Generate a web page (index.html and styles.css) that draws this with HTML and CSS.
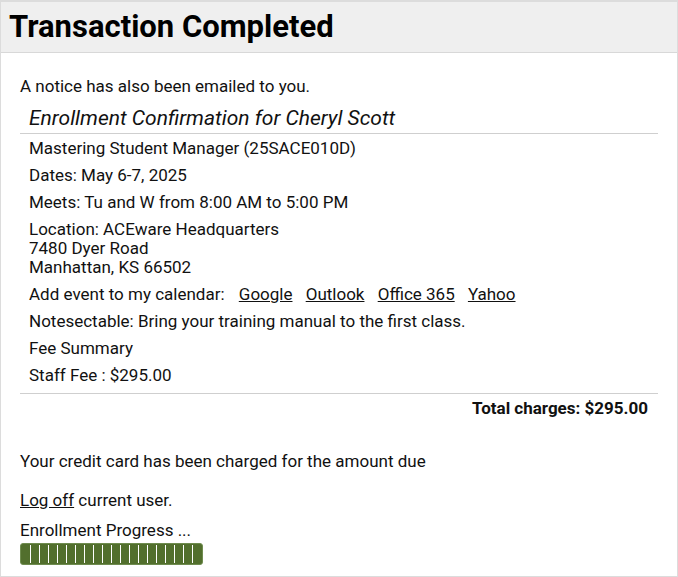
FILE: index.html
```html
<!DOCTYPE html>
<html>
<head>
<meta charset="utf-8">
<link rel="stylesheet" href="styles.css">
</head>
<body>
<div class="page">
  <div class="header"><h1 class="title">Transaction Completed</h1></div>
  <div class="content">
    <p class="notice">A notice has also been emailed to you.</p>
    <div class="confirm">
      <h2 class="confirm-title">Enrollment Confirmation for Cheryl Scott</h2>
      <div class="rows">
        <div class="row">Mastering Student Manager (25SACE010D)</div>
        <div class="row">Dates: May 6-7, 2025</div>
        <div class="row">Meets: Tu and W from 8:00 AM to 5:00 PM</div>
        <div class="row">Location: ACEware Headquarters<br>7480 Dyer Road<br>Manhattan, KS 66502</div>
        <div class="row">Add event to my calendar: <span class="cal"><a href="#">Google</a> <a href="#">Outlook</a> <a href="#">Office 365</a> <a href="#">Yahoo</a></span></div>
        <div class="row">Notesectable: Bring your training manual to the first class.</div>
        <div class="row">Fee Summary</div>
        <div class="row">Staff Fee : $295.00</div>
      </div>
      <div class="total">Total charges: $295.00</div>
    </div>
    <p class="charged">Your credit card has been charged for the amount due</p>
    <p class="logoff"><a href="#">Log off</a> current user.</p>
    <p class="progress-label">Enrollment Progress ...</p>
    <div class="progress">
      <span class="cell"></span><span class="cell"></span><span class="cell"></span><span class="cell"></span><span class="cell"></span>
      <span class="cell"></span><span class="cell"></span><span class="cell"></span><span class="cell"></span><span class="cell"></span>
      <span class="cell"></span><span class="cell"></span><span class="cell"></span><span class="cell"></span><span class="cell"></span>
      <span class="cell"></span><span class="cell"></span><span class="cell"></span><span class="cell"></span><span class="cell"></span>
    </div>
  </div>
</div>
</body>
</html>
```
FILE: styles.css
```css
html, body {
  margin: 0;
  padding: 0;
  background: #fff;
}
body {
  font-family: Roboto, "Liberation Sans", sans-serif;
  font-size: 17px;
  line-height: 19px;
  color: #111;
}
.page {
  width: 678px;
  height: 577px;
  box-sizing: border-box;
  border: 1px solid #dcdcdc;
  border-top: 2px solid #dcdcdc;
}
.header {
  background: #efefef;
  border-bottom: 1px solid #d8d8d8;
  height: 50px;
  display: flex;
  align-items: center;
}
.title {
  margin: 0 0 0 8px;
  font-size: 31px;
  font-weight: 700;
  line-height: 36px;
  color: #000;
}
.content {
  padding: 0 19px;
}
p {
  margin: 0;
}
.notice {
  margin-top: 24px;
}
.confirm {
  margin-top: 10px;
}
.confirm-title {
  margin: 0;
  font-size: 21px;
  font-weight: 400;
  font-style: italic;
  line-height: 25px;
  padding: 0 0 2px 9px;
  border-bottom: 1px solid #cfcfcf;
}
.rows {
  padding: 0.5px 0 4.5px;
  border-bottom: 1px solid #cfcfcf;
}
.row {
  padding: 4px 0 4px 9px;
}
.cal a {
  margin-left: 9px;
}
.cal a:first-child {
  margin-left: 10px;
}
a {
  color: #111;
  text-decoration: underline;
}
.total {
  text-align: right;
  font-weight: 700;
  padding: 4.5px 10px 0 0;
}
.charged {
  margin-top: 34px;
}
.logoff {
  margin-top: 20px;
}
.progress-label {
  margin-top: 11px;
}
.progress {
  margin-top: 3.5px;
  width: 183px;
  height: 22px;
  box-sizing: border-box;
  display: flex;
  background: #526f2d;
  border: 1px solid #6f8c4f;
  border-radius: 3px;
  padding: 1px;
}
.cell {
  flex: 1;
  border-left: 1px solid #fff;
}
.cell:first-child {
  border-left: none;
}
```
